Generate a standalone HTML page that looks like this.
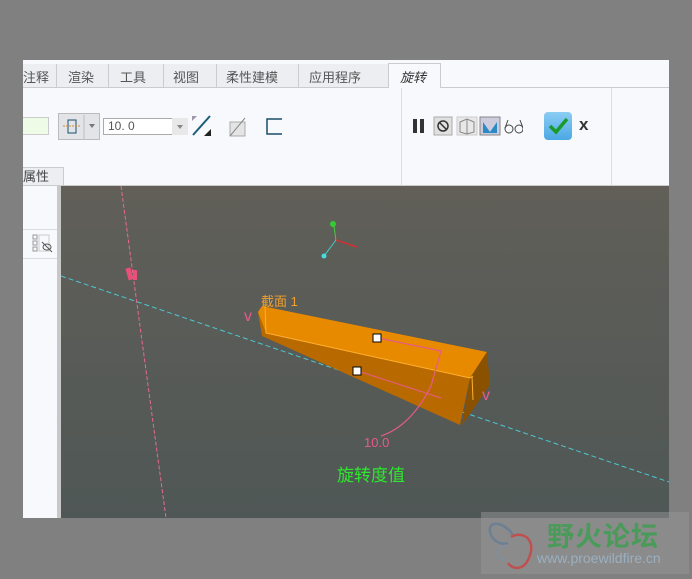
<!DOCTYPE html>
<html><head><meta charset="utf-8"><style>
*{margin:0;padding:0;box-sizing:border-box}
body{width:692px;height:579px;background:#808080;position:relative;overflow:hidden;font-family:"Liberation Sans","Noto Sans CJK SC",sans-serif}
.a{position:absolute}
.tab{position:absolute;top:67px;font-size:13px;color:#555;height:20px}
</style></head><body>
<div class="a" style="left:23px;top:60px;width:646px;height:458px;background:#f8f9fc"></div>
<div class="a" style="left:23px;top:64px;width:365px;height:24px;background:#eceef2;border-bottom:1px solid #ccc"></div>
<div class="a" style="left:388px;top:87px;width:281px;height:1px;background:#ccc"></div>
<div class="tab" style="left:23px">注释</div>
<div class="a" style="left:56px;top:64px;width:1px;height:24px;background:#ccc"></div>
<div class="tab" style="left:68px">渲染</div>
<div class="a" style="left:108px;top:64px;width:1px;height:24px;background:#ccc"></div>
<div class="tab" style="left:120px">工具</div>
<div class="a" style="left:163px;top:64px;width:1px;height:24px;background:#ccc"></div>
<div class="tab" style="left:173px">视图</div>
<div class="a" style="left:216px;top:64px;width:1px;height:24px;background:#ccc"></div>
<div class="tab" style="left:226px">柔性建模</div>
<div class="a" style="left:298px;top:64px;width:1px;height:24px;background:#ccc"></div>
<div class="tab" style="left:309px">应用程序</div>
<div class="a" style="left:388px;top:63px;width:53px;height:25px;background:#f8f9fc;border:1px solid #ccc;border-bottom:none"></div>
<div class="tab" style="left:400px;font-style:italic;color:#333">旋转</div>
<div class="a" style="left:23px;top:117px;width:26px;height:18px;background:#eefbe6;border:1px solid #ccc;border-left:none"></div>
<div class="a" style="left:58px;top:113px;width:42px;height:27px;background:#e2e4e8;border:1px solid #bbb"></div>
<svg class="a" style="left:60px;top:115px" width="40" height="24"><rect x="8" y="5" width="8" height="13" fill="none" stroke="#1b4e6b"/><line x1="3" y1="11" x2="21" y2="11" stroke="#d48a3a" stroke-dasharray="2,1"/><line x1="24" y1="0" x2="24" y2="24" stroke="#bbb"/><path d="M29 9 L35 9 L32 13Z" fill="#777"/></svg>
<div class="a" style="left:103px;top:118px;width:85px;height:17px;background:#fff;border:1px solid #aaa;font-size:12px;color:#555;padding-left:4px;line-height:15px">10. 0</div>
<svg class="a" style="left:172px;top:118px" width="16" height="17"><rect x="0" y="0" width="16" height="17" fill="#e8e8e8"/><path d="M5 7 L11 7 L8 11Z" fill="#888"/></svg>
<svg class="a" style="left:190px;top:114px" width="24" height="24"><path d="M2 2 L7 2 L2 7Z" fill="#99a"/><line x1="3" y1="21" x2="20" y2="2" stroke="#1b5e7b" stroke-width="2"/><path d="M21 22 L14 22 L21 15Z" fill="#222"/></svg>
<svg class="a" style="left:228px;top:117px" width="20" height="20"><rect x="2" y="5" width="15" height="14" fill="#e4e4e4" stroke="#aaa"/><line x1="2" y1="19" x2="17" y2="1" stroke="#888"/></svg>
<svg class="a" style="left:265px;top:117px" width="20" height="20"><path d="M17 2 L2 2 L2 17 L17 17" fill="none" stroke="#1b4e6b" stroke-width="1.5"/></svg>
<div class="a" style="left:401px;top:88px;width:1px;height:98px;background:#ddd"></div>
<div class="a" style="left:611px;top:88px;width:1px;height:98px;background:#ddd"></div>
<div class="a" style="left:413px;top:119px;width:4px;height:14px;background:#333"></div>
<div class="a" style="left:420px;top:119px;width:4px;height:14px;background:#333"></div>
<svg class="a" style="left:433px;top:116px" width="90" height="22"><rect x="1" y="1" width="18" height="18" fill="#e0e0e0" stroke="#aaa"/><circle cx="10" cy="10" r="5" fill="none" stroke="#333" stroke-width="1.5"/><line x1="6" y1="6" x2="14" y2="14" stroke="#333" stroke-width="1.5"/><rect x="24" y="1" width="20" height="18" fill="#e8e8e8" stroke="#ccc"/><path d="M27 6 L34 3 L41 6 L41 16 L34 18 L27 16Z M34 3 L34 18" fill="none" stroke="#888"/><rect x="47" y="1" width="20" height="18" fill="#ccd" stroke="#888"/><path d="M50 6 L57 16 L64 6 L64 17 L50 17Z" fill="#2a8ac8"/><path d="M72 12 L75 4 M90 12 L87 4" stroke="#444" fill="none"/><circle cx="76" cy="13" r="4" fill="none" stroke="#444"/><circle cx="86" cy="13" r="4" fill="none" stroke="#444"/></svg>
<div class="a" style="left:544px;top:112px;width:28px;height:28px;border-radius:4px;background:linear-gradient(#8ccdf4,#4aa8e4)"></div>
<svg class="a" style="left:544px;top:112px" width="28" height="28"><path d="M6 14 L12 20 L23 7" fill="none" stroke="#1a9a2a" stroke-width="3.5"/></svg>
<div class="a" style="left:579px;top:115px;font-size:17px;font-weight:bold;color:#333">x</div>
<div class="a" style="left:23px;top:167px;width:41px;height:19px;background:#eceef2;border:1px solid #ccc;border-left:none;font-size:13px;color:#444;line-height:18px">属性</div>
<div class="a" style="left:23px;top:185px;width:646px;height:1px;background:#ccc"></div>
<div class="a" style="left:57px;top:186px;width:4px;height:332px;background:#c8c8c8"></div>
<div class="a" style="left:23px;top:229px;width:34px;height:1px;background:#ddd"></div>
<div class="a" style="left:23px;top:258px;width:34px;height:1px;background:#ddd"></div>
<svg class="a" style="left:31px;top:233px" width="24" height="22"><rect x="2" y="2" width="4" height="4" fill="none" stroke="#999"/><rect x="2" y="8" width="4" height="4" fill="none" stroke="#999"/><rect x="2" y="14" width="4" height="4" fill="none" stroke="#999"/><rect x="8" y="2" width="10" height="16" fill="none" stroke="#ccc"/><ellipse cx="16" cy="14" rx="4" ry="3" fill="none" stroke="#555"/><line x1="11" y1="9" x2="21" y2="19" stroke="#555"/></svg>
<svg class="a" style="left:61px;top:186px" width="608" height="332">
<defs><linearGradient id="g" x1="0" y1="0" x2="0" y2="1"><stop offset="0" stop-color="#615f58"/><stop offset="1" stop-color="#4f5756"/></linearGradient></defs>
<rect width="608" height="332" fill="url(#g)"/>
<line x1="60" y1="0" x2="105" y2="332" stroke="#e86a8a" stroke-dasharray="4,2"/>
<rect x="66" y="82" width="5" height="12" fill="#e8507a" transform="rotate(-15 68 88)"/><rect x="72" y="84" width="4" height="10" fill="#e8507a"/>
<line x1="0" y1="90" x2="608" y2="296" stroke="#4cc8d0" stroke-dasharray="5,3"/>
<circle cx="272" cy="38" r="3" fill="#3c3"/><line x1="273" y1="40" x2="275" y2="55" stroke="#4c4"/>
<line x1="275" y1="54" x2="296" y2="61" stroke="#c33" stroke-width="1.5"/><line x1="275" y1="54" x2="263" y2="70" stroke="#4cc"/><circle cx="263" cy="70" r="2.5" fill="#4dd"/>
<polygon points="197,126 201,150 399,239 409,192 205,147" fill="#b86a00"/>
<polygon points="201,120 426,166 409,192 205,147 197,126" fill="#e88a00"/>
<polygon points="409,192 426,166 429,199 401,239" fill="#8a5200"/>
<polyline points="204,120 205,147 409,192 412,190" fill="none" stroke="#ffb030"/>
<line x1="411" y1="190" x2="412" y2="214" stroke="#ffb030"/>
<path d="M317 152 L380 165 L370 200 Q350 240 320 250" fill="none" stroke="#e85a8a" stroke-width="1.2"/>
<line x1="297" y1="185" x2="380" y2="212" stroke="#e85a8a"/>
<rect x="312" y="148" width="8" height="8" fill="#fff" stroke="#000"/>
<rect x="292" y="181" width="8" height="8" fill="#fff" stroke="#000"/>
<text x="200" y="120" font-size="13" fill="#f0a030" font-family="Liberation Sans,Noto Sans CJK SC,sans-serif">截面 1</text>
<text x="183" y="135" font-size="16" fill="#e85a8a">v</text>
<text x="421" y="214" font-size="16" fill="#e85a8a">v</text>
<text x="303" y="261" font-size="13" fill="#e85a8a">10.0</text>
<text x="276" y="295" font-size="17" fill="#2ee82e" font-family="Liberation Sans,Noto Sans CJK SC,sans-serif">旋转度值</text>
</svg>
<div class="a" style="left:481px;top:512px;width:208px;height:62px;background:rgba(150,150,150,0.5)"></div>
<svg class="a" style="left:483px;top:515px" width="60" height="60"><path d="M30 20 C20 5 2 5 8 20 C12 28 20 30 25 28" fill="none" stroke="#6b7f95" stroke-width="2.5"/><path d="M28 22 C40 15 55 25 45 45 C40 55 30 55 25 48" fill="none" stroke="#c05050" stroke-width="2.5"/><path d="M24 30 C12 32 10 45 22 45" fill="none" stroke="#8090a0" stroke-width="1.5"/></svg>
<div class="a" style="left:547px;top:515px;font-size:27px;font-weight:bold;color:#4a9a5a;letter-spacing:1px">野火论坛</div>
<div class="a" style="left:537px;top:550px;font-size:14px;color:#9ab0c0">www.proewildfire.cn</div>
</body></html>
